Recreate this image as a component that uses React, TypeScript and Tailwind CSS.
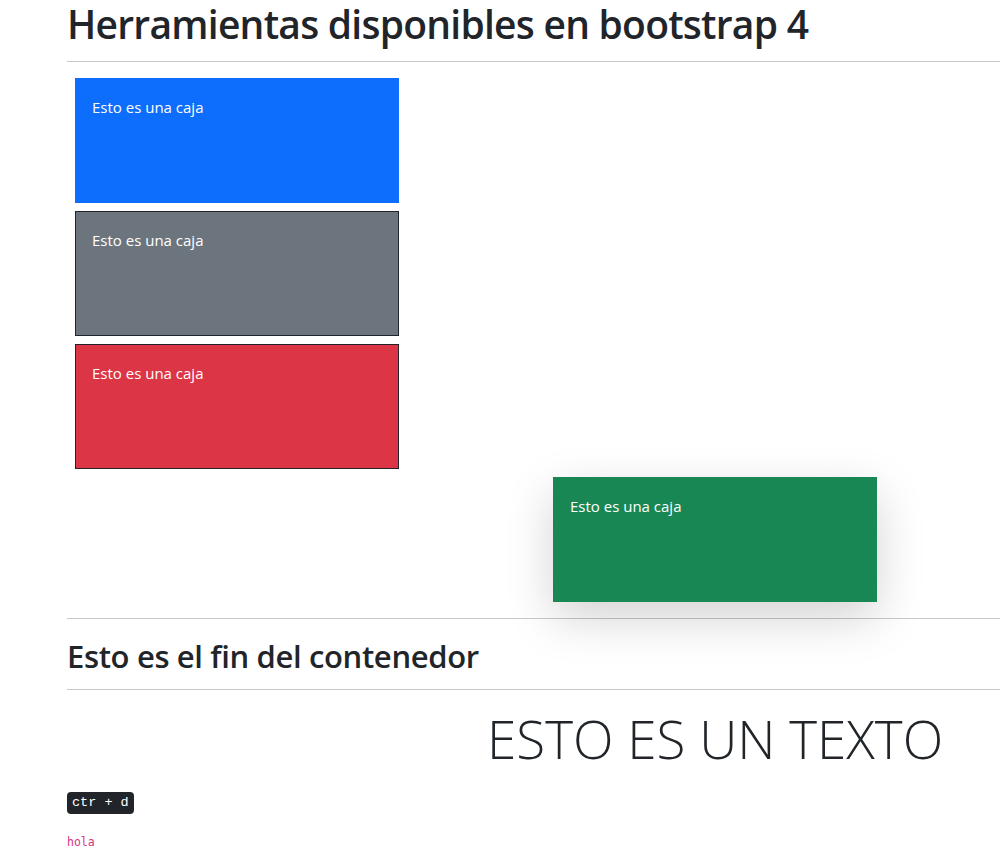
import React from "react";

export default function App() {
  return (
    <div
      className="w-full h-[862px] overflow-hidden bg-white text-[#212529]"
      style={{ fontFamily: '"Open Sans", "Noto Sans", sans-serif' }}
    >
      <div className="pl-[67px]">
        <h1 className="text-[39px] leading-[48px] font-semibold tracking-[-0.75px]">
          Herramientas disponibles en bootstrap 4
        </h1>
        <div className="h-px bg-[#c8c9ca] mt-[13px]" />
        <div className="flex flex-col gap-2 pt-[16px] pl-[8px]">
          <div className="w-[324px] h-[125px] px-[17px] pt-[17px] text-white text-[15px] leading-[24px] bg-[#0d6efd]">
            Esto es una caja
          </div>
          <div className="w-[324px] h-[125px] px-[16px] pt-[16px] text-white text-[15px] leading-[24px] bg-[#6c757d] border border-[#212529]">
            Esto es una caja
          </div>
          <div className="w-[324px] h-[125px] px-[16px] pt-[16px] text-white text-[15px] leading-[24px] bg-[#dc3545] border border-[#212529]">
            Esto es una caja
          </div>
          <div className="ml-[478px] w-[324px] h-[125px] px-[17px] pt-[17px] text-white text-[15px] leading-[24px] bg-[#198754] shadow-[0_16px_48px_rgba(0,0,0,0.175)]">
            Esto es una caja
          </div>
        </div>
        <div className="h-px bg-[#c8c9ca] mt-[16px]" />
        <h2 className="text-[31px] leading-[38px] font-semibold mt-[18px] tracking-[-0.35px]">
          Esto es el fin del contenedor
        </h2>
        <div className="h-px bg-[#c8c9ca] mt-[14px]" />
        <div className="pl-[420px] mt-[16px]">
          <div className="text-[53px] leading-[66px] font-light whitespace-nowrap">
            ESTO ES UN TEXTO
          </div>
        </div>
        <div className="mt-[20px] flex">
          <kbd
            className="block bg-[#212529] text-white rounded-[4px] px-[5px] text-[13.5px] leading-[22px]"
            style={{ fontFamily: '"Liberation Mono", monospace' }}
          >
            ctr + d
          </kbd>
        </div>
        <div className="mt-[18px] leading-[16px]">
          <code
            className="text-[#d63384] text-[11.5px] leading-[16px]"
            style={{ fontFamily: '"DejaVu Sans Mono", monospace' }}
          >
            hola
          </code>
        </div>
      </div>
    </div>
  );
}
